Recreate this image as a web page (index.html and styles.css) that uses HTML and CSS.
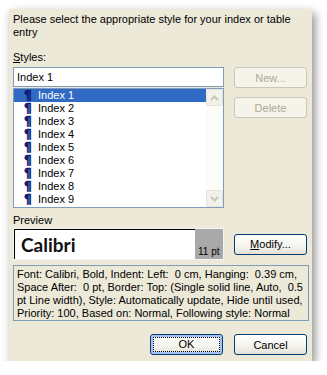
FILE: index.html
```html
<!DOCTYPE html>
<html lang="en">
<head>
  <meta charset="UTF-8">
  <title>Style</title>
  <link rel="stylesheet" href="styles.css">
</head>
<body>

  <div class="dialog">
    <p class="intro">Please select the appropriate style for your index or table entry</p>

    <div class="main">
      <div class="left">
        <label class="label"><u>S</u>tyles:</label>
        <div class="field">Index 1</div>
        <div class="list">
          <ul class="items">
            <li class="selected"><span class="mark">¶</span>Index 1</li>
            <li><span class="mark">¶</span>Index 2</li>
            <li><span class="mark">¶</span>Index 3</li>
            <li><span class="mark">¶</span>Index 4</li>
            <li><span class="mark">¶</span>Index 5</li>
            <li><span class="mark">¶</span>Index 6</li>
            <li><span class="mark">¶</span>Index 7</li>
            <li><span class="mark">¶</span>Index 8</li>
            <li><span class="mark">¶</span>Index 9</li>
          </ul>
          <div class="scrollbar">
            <div class="arrow">
              <svg width="9" height="6" viewBox="0 0 9 6"><path d="M1 5 L4.5 1.5 L8 5" fill="none" stroke="#c9c7ba" stroke-width="2"/></svg>
            </div>
            <div class="arrow">
              <svg width="9" height="6" viewBox="0 0 9 6"><path d="M1 1 L4.5 4.5 L8 1" fill="none" stroke="#c9c7ba" stroke-width="2"/></svg>
            </div>
          </div>
        </div>
      </div>

      <div class="side">
        <button class="btn" disabled>New...</button>
        <button class="btn" disabled>Delete</button>
      </div>
    </div>

    <div class="label preview-label">Preview</div>
    <div class="preview-row">
      <div class="preview">
        <div class="sample">Calibri</div>
        <div class="size">11 pt</div>
      </div>
      <button class="btn"><u>M</u>odify...</button>
    </div>

    <div class="description">Font: Calibri, Bold, Indent: Left:&nbsp; 0 cm, Hanging:&nbsp; 0.39 cm, Space After:&nbsp; 0 pt, Border: Top: (Single solid line, Auto,&nbsp; 0.5 pt Line width), Style: Automatically update, Hide until used, Priority: 100, Based on: Normal, Following style: Normal</div>

    <div class="actions">
      <button class="btn default"><span class="focus">OK</span></button>
      <button class="btn">Cancel</button>
    </div>
  </div>

</body>
</html>
```

FILE: styles.css
```css
* {
  box-sizing: border-box;
  margin: 0;
  padding: 0;
}

body {
  background: #ffffff;
  font-family: "Liberation Sans", Arial, sans-serif;
  font-size: 11px;
  line-height: 13px;
  color: #000000;
}

.dialog {
  margin: 9px 0 0 9px;
  width: 303px;
  height: 352px;
  padding: 4px 5px 0 4px;
  background: #ece9d8;
  box-shadow: 3px 4px 9px rgba(0, 0, 0, 0.45);
}

.intro {
  height: 26px;
  padding-right: 10px;
}

.main {
  display: flex;
  gap: 10px;
  margin-top: 11px;
}

.left {
  width: 211px;
}

.label {
  display: block;
  height: 17px;
  padding-top: 1px;
}

.field {
  height: 20px;
  border: 1px solid #7f9db9;
  background: #ffffff;
  padding: 3px 3px 0;
}

.list {
  display: flex;
  margin-top: 1px;
  height: 120px;
  border: 1px solid #7f9db9;
  background: #ffffff;
}

.items {
  list-style: none;
  flex: 1;
}

.items li {
  height: 13px;
  padding-left: 10px;
}

.items li.selected {
  background: #316ac5;
  color: #ffffff;
}

.mark {
  display: inline-block;
  width: 14px;
  font-family: "DejaVu Sans", sans-serif;
  font-size: 12px;
  font-weight: bold;
  color: #0c1c78;
  -webkit-text-stroke: 0.6px #0c1c78;
}

.scrollbar {
  width: 17px;
  background: #fcfcf8;
  display: flex;
  flex-direction: column;
  justify-content: space-between;
}

.arrow {
  height: 17px;
  border: 1px solid #e6e4d9;
  border-radius: 2px;
  background: #f2f1ea;
  display: flex;
  align-items: center;
  justify-content: center;
}

.side {
  display: flex;
  flex-direction: column;
  gap: 9px;
  padding-top: 17px;
}

.btn {
  width: 73px;
  height: 21px;
  border: 1px solid #003c74;
  border-radius: 3px;
  background: linear-gradient(#ffffff, #f4f3ee 60%, #e3e1d6);
  font-family: inherit;
  font-size: 11px;
  color: #000000;
}

.btn:disabled {
  border-color: #c9c7ba;
  background: #f5f4ea;
  color: #aca899;
}

.preview-label {
  margin-top: 5px;
  height: 15px;
}

.preview-row {
  display: flex;
  gap: 10px;
  align-items: center;
}

.preview {
  display: flex;
  width: 211px;
  height: 32px;
  border: 1px solid #f4f4f0;
  background: #ffffff;
}

.sample {
  flex: 1;
  border-top: 1px solid #000000;
  border-left: 1px solid #000000;
  padding: 5px 0 0 6px;
  font-family: Lato, "Open Sans", sans-serif;
  font-size: 19px;
  line-height: 20px;
  font-weight: bold;
  color: #111111;
}

.size {
  width: 28px;
  background: #a9a9a9;
  font-size: 10px;
  padding: 16px 0 0 3px;
}

.description {
  margin-top: 5px;
  width: 296px;
  height: 56px;
  border: 1px solid #7f9db9;
  padding: 2px 3px;
}

.actions {
  display: flex;
  justify-content: flex-end;
  gap: 11px;
  margin-top: 13px;
}

.btn.default {
  box-shadow: inset 0 0 0 2px #a9c0f3;
}

.focus {
  display: inline-block;
  width: 67px;
  border: 1px dotted #000000;
  line-height: 13px;
}
```
